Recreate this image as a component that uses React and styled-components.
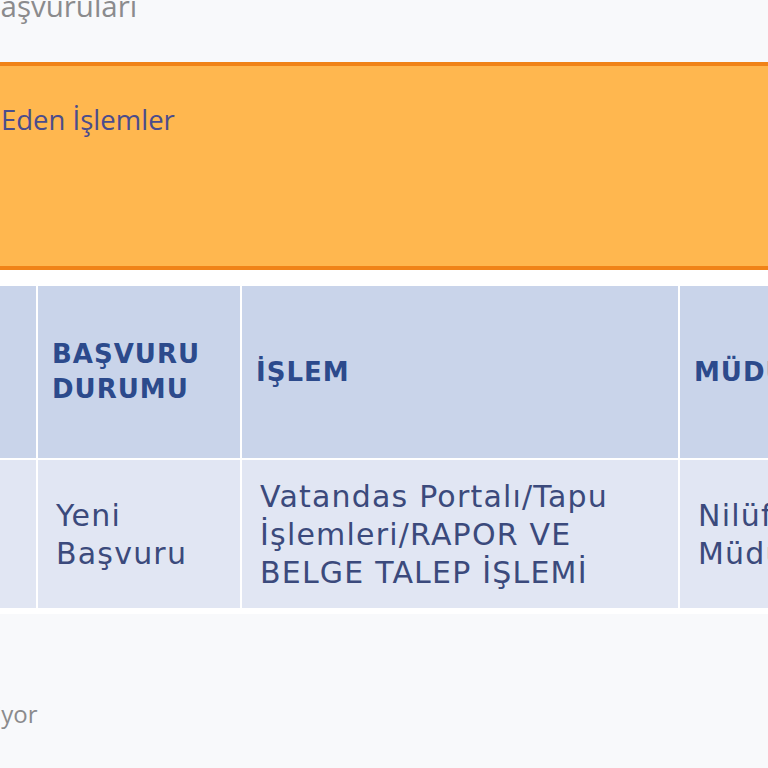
import React from "react";
import styled, { createGlobalStyle } from "styled-components";

const GlobalStyle = createGlobalStyle`
  html, body {
    margin: 0;
    padding: 0;
    background: #f8f9fb;
    overflow: hidden;
  }
`;

const rows = [
  {
    no: "1",
    status: "Yeni Başvuru",
    action: "Vatandas Portalı/Tapu İşlemleri/RAPOR VE BELGE TALEP İŞLEMİ",
    office: "Nilüfer Tapu Müdürlüğü",
  },
];

function App() {
  return (
    <>
      <GlobalStyle />
      <Page>
        <Title>Tapu Başvuruları</Title>
        <Banner>
          <BannerText>Devam Eden İşlemler</BannerText>
        </Banner>
        <TableCard>
          <Table>
            <colgroup>
              <col style={{ width: 176 }} />
              <col style={{ width: 202 }} />
              <col style={{ width: 436 }} />
              <col style={{ width: 320 }} />
            </colgroup>
            <thead>
              <tr>
                <Th>NO</Th>
                <Th>BAŞVURU DURUMU</Th>
                <Th>İŞLEM</Th>
                <Th>MÜDÜRLÜK</Th>
              </tr>
            </thead>
            <tbody>
              {rows.map((r) => (
                <tr key={r.no}>
                  <Td>{r.no}</Td>
                  <Td>{r.status}</Td>
                  <Td>{r.action}</Td>
                  <Td>{r.office}</Td>
                </tr>
              ))}
            </tbody>
          </Table>
        </TableCard>
        <Footer>Gösteriliyor</Footer>
      </Page>
    </>
  );
}

const Page = styled.div`
  width: 1300px;
  margin-left: -142px;
  font-family: "Open Sans", "Noto Sans", sans-serif;
`;

const Title = styled.h1`
  margin: -14px 0 0;
  height: 76px;
  padding-left: 47px;
  font-size: 29.5px;
  font-weight: 400;
  line-height: 40px;
  color: #8b8b8d;
`;

const Banner = styled.div`
  height: 208px;
  box-sizing: border-box;
  background: #ffb74f;
  border-top: 4px solid #f08318;
  border-bottom: 4px solid #f08318;
  padding: 35px 0 0 46px;
`;

const BannerText = styled.div`
  font-size: 27.5px;
  font-weight: 500;
  color: #4b4c8c;
  line-height: 38px;
`;

const TableCard = styled.div`
  background: #ffffff;
  padding: 14px 0 4px;
`;

const Table = styled.table`
  table-layout: fixed;
  border-collapse: separate;
  border-spacing: 2px;
  font-family: "DejaVu Sans", "Noto Sans", sans-serif;
  width: 1142px;
`;

const Th = styled.th`
  height: 172px;
  box-sizing: border-box;
  padding: 0 14px;
  background: #c9d4ea;
  color: #2c4a8c;
  font-size: 26px;
  font-weight: 600;
  letter-spacing: 1px;
  line-height: 35px;
  text-align: left;
  vertical-align: middle;
`;

const Td = styled.td`
  height: 148px;
  box-sizing: border-box;
  padding: 2px 16px 0 18px;
  background: #e1e6f3;
  color: #3b4a7c;
  font-size: 30px;
  letter-spacing: 1.2px;
  line-height: 38px;
  vertical-align: middle;
`;

const Footer = styled.div`
  padding: 83px 0 0 50px;
  font-size: 24px;
  color: #8b8b8d;
`;

export default App;
